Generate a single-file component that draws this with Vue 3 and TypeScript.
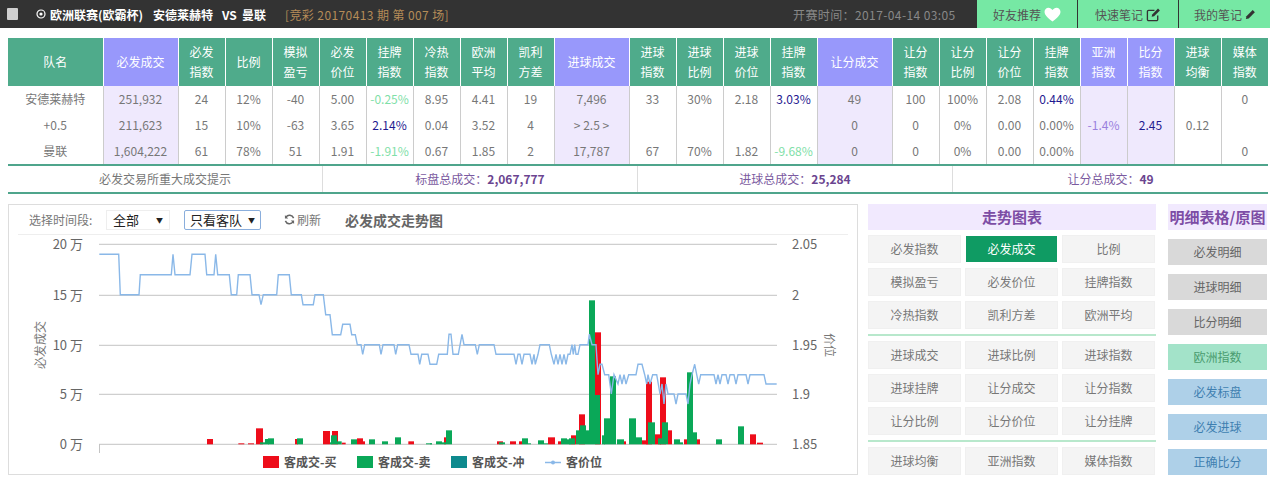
<script setup lang="ts">
type Cell = { t: string; c?: string }
const headers: { t: string[]; p?: boolean }[] = [
  { t: ['队名'] }, { t: ['必发成交'], p: true }, { t: ['必发', '指数'] }, { t: ['比例'] }, { t: ['模拟', '盈亏'] },
  { t: ['必发', '价位'] }, { t: ['挂牌', '指数'] }, { t: ['冷热', '指数'] }, { t: ['欧洲', '平均'] }, { t: ['凯利', '方差'] },
  { t: ['进球成交'], p: true }, { t: ['进球', '指数'] }, { t: ['进球', '比例'] }, { t: ['进球', '价位'] }, { t: ['挂牌', '指数'] },
  { t: ['让分成交'], p: true }, { t: ['让分', '指数'] }, { t: ['让分', '比例'] }, { t: ['让分', '价位'] }, { t: ['挂牌', '指数'] },
  { t: ['亚洲', '指数'], p: true }, { t: ['比分', '指数'], p: true }, { t: ['进球', '均衡'] }, { t: ['媒体', '指数'] },
]
const tint = new Set([1, 10, 15, 20, 21])
const rows: Cell[][] = [
  ['安德莱赫特', '251,932', '24', '12%', '-40', '5.00', 'g-0.25%', '8.95', '4.41', '19', '7,496', '33', '30%', '2.18', 'b3.03%', '49', '100', '100%', '2.08', 'b0.44%', '', '', '', '0'],
  ['+0.5', '211,623', '15', '10%', '-63', '3.65', 'b2.14%', '0.04', '3.52', '4', '> 2.5 >', '', '', '', '', '0', '0', '0%', '0.00', '0.00%', 'p-1.4%', 'b2.45', '0.12', ''],
  ['曼联', '1,604,222', '61', '78%', '51', '1.91', 'g-1.91%', '0.67', '1.85', '2', '17,787', '67', '70%', '1.82', 'g-9.68%', '0', '0', '0%', '0.00', '0.00%', '', '', '', '0'],
].map((r) =>
  r.map((s) => {
    const k = s[0]
    if ((k === 'g' || k === 'b' || k === 'p') && s.length > 1) return { t: s.slice(1), c: k }
    return { t: s }
  }),
)
const summary = [
  { l: '必发交易所重大成交提示', v: '', plain: true },
  { l: '标盘总成交：', v: '2,067,777' },
  { l: '进球总成交：', v: '25,284' },
  { l: '让分总成交：', v: '49' },
]
const groups = [
  [['必发指数', '必发成交', '比例'], ['模拟盈亏', '必发价位', '挂牌指数'], ['冷热指数', '凯利方差', '欧洲平均']],
  [['进球成交', '进球比例', '进球指数'], ['进球挂牌', '让分成交', '让分指数'], ['让分比例', '让分价位', '让分挂牌']],
  [['进球均衡', '亚洲指数', '媒体指数']],
]
const details = [
  { t: '必发明细', k: 'gray' }, { t: '进球明细', k: 'gray' }, { t: '比分明细', k: 'gray' },
  { t: '欧洲指数', k: 'mint' }, { t: '必发标盘', k: 'blue' }, { t: '必发进球', k: 'blue' }, { t: '正确比分', k: 'blue' },
]
const grid = [
  { y: 244.3, l: '20 万', r: '2.05' }, { y: 295.3, l: '15 万', r: '2' }, { y: 345.3, l: '10 万', r: '1.95' },
  { y: 394.3, l: '5 万', r: '1.9' }, { y: 444.3, l: '0 万', r: '1.85' },
]
const L: number[][] = [[298,163],[356,163],[361,284],[417,284],[421,224],[514,224],[519,163],[525,224],[570,224],[576,163],[615,163],[620,224],[642,224],[647,163],[653,224],[688,224],[694,284],[710,284],[715,224],[750,224],[756,284],[777,284],[783,314],[790,284],[830,284],[835,224],[868,224],[874,284],[904,284],[909,314],[940,314],[945,284],[970,284],[977,344],[990,344],[997,404],[1022,404],[1028,373],[1050,373],[1055,404],[1066,404],[1072,434],[1083,434],[1088,463],[1094,434],[1138,434],[1143,463],[1149,434],[1182,434],[1187,463],[1193,434],[1227,434],[1233,463],[1254,463],[1259,493],[1265,463],[1284,463],[1290,493]]
const R: number[][] = [[20,493],[26,463],[52,463],[57,403],[63,403],[69,463],[85,463],[96,403],[102,434],[136,434],[142,463],[148,434],[192,434],[198,463],[252,463],[258,493],[264,463],[270,463],[276,493],[282,463],[300,463],[306,493],[312,463],[316,493],[324,463],[330,434],[358,434],[364,463],[372,493],[378,463],[384,493],[390,463],[396,493],[402,463],[408,493],[414,463],[420,463],[426,434],[430,463],[434,434],[438,463],[444,463],[450,434],[474,434],[478,403],[486,434],[498,434],[504,524],[510,493],[516,493],[524,524],[536,524],[544,582],[552,524],[564,552],[570,524],[576,552],[582,524],[588,552],[596,524],[618,524],[624,493],[636,493],[644,524],[650,552],[654,524],[660,552],[668,524],[680,524],[690,582],[696,552],[702,612],[708,552],[714,582],[732,582],[738,612],[744,582],[768,582],[774,612],[780,552],[786,524],[794,493],[800,524],[806,552],[812,524],[852,524],[858,552],[864,524],[870,552],[876,524],[888,524],[894,552],[900,524],[912,524],[918,552],[924,524],[948,524],[954,552],[960,524],[1002,524],[1008,552],[1040,552]]
const pricePts = [...L, ...R.map(([x, y]) => [x + 1290, y])]
  .map(([x, y]) => `${(x / 3).toFixed(1)},${(200 + y / 3).toFixed(1)}`)
  .join(' ')
const bar = (a: number[], off: number) => ({
  x: (a[0] + off) / 3,
  w: (a[1] - a[0]) / 3,
  y: 200 + a[2] / 3,
  h: 444.3 - (200 + a[2] / 3),
})
const redBars = [
  ...[[621,639,717],[715,733,730],[744,762,730],[768,789,685],[885,894,717],[969,990,693],[996,1014,693],[1025,1037,728],[1071,1089,715],[1089,1095,724],[1225,1242,724]].map((a) => bar(a, 0)),
  ...[[42,48,712],[201,219,724],[240,258,724],[267,276,724],[354,375,712],[384,393,724],[423,438,706],[447,465,643],[495,513,397],[582,588,724],[636,654,721],[648,666,545],[675,693,703],[690,708,532],[714,726,691],[762,771,718],[801,810,718],[960,978,703],[981,999,728]].map((a) => bar(a, 1290)),
]
const greenBars = [
  ...[[780,795,727],[795,807,717],[804,822,715],[891,909,715],[990,996,727],[993,1011,706],[1011,1025,724],[1053,1071,718],[1107,1125,718],[1146,1164,724],[1185,1203,712],[1278,1296,730]].map((a) => bar(a, 0)),
  ...[[0,6,730],[18,36,724],[36,48,727],[48,66,691],[207,225,727],[276,294,715],[294,303,730],[324,342,721],[342,354,730],[393,411,715],[411,423,718],[417,435,715],[438,450,691],[450,468,676],[468,477,691],[477,495,301],[495,510,585],[516,525,706],[522,540,655],[540,558,529],[561,582,718],[597,618,655],[618,636,712],[654,675,667],[684,696,715],[696,714,667],[732,750,718],[750,759,727],[771,789,517],[789,801,697],[858,876,718],[924,942,679]].map((a) => bar(a, 1290)),
]
</script>

<template>
  <div class="page">
    <header class="top">
      <span class="check"></span>
      <div class="match">
        <svg class="target" viewBox="0 0 10 10"><circle cx="5" cy="5" r="4" fill="none" stroke="#fff" stroke-width="1.2" /><circle cx="5" cy="5" r="1.6" fill="#fff" /></svg>
        <b class="league">欧洲联赛(欧霸杯)</b>
        <b class="home">安德莱赫特</b>
        <b class="vs">VS</b>
        <b>曼联</b>
      </div>
      <span class="issue">[竞彩 20170413 期 第 007 场]</span>
      <span class="time">开赛时间：2017-04-14 03:05</span>
      <nav class="tabs">
        <a class="tab">好友推荐
          <svg viewBox="0 0 18 16" class="heart"><path d="M9 15.5C4 11.5.5 8.6.5 5 .5 2.5 2.4.7 4.7.7 6.5.7 8 1.7 9 3.3 10 1.7 11.5.7 13.3.7c2.3 0 4.2 1.8 4.2 4.3 0 3.6-3.5 6.5-8.5 10.5z" fill="#fff" /></svg>
        </a>
        <a class="tab">快速笔记
          <svg viewBox="0 0 16 16" class="ic"><path d="M12.5 9v4.2a1.3 1.3 0 0 1-1.3 1.3H2.8a1.3 1.3 0 0 1-1.3-1.3V4.8a1.3 1.3 0 0 1 1.3-1.3H9" fill="none" stroke="#333" stroke-width="1.4" /><path d="M6 10.5l.6-2.6L12.8 1.7l2 2-6.2 6.2z" fill="#333" /></svg>
        </a>
        <a class="tab last">我的笔记
          <svg viewBox="0 0 12 12" class="pen"><path d="M1 11l.6-3L8.4 1.2l2.4 2.4L4 10.4z" fill="#333" /></svg>
        </a>
      </nav>
    </header>

    <table class="data">
      <colgroup>
        <col class="c-name" />
        <template v-for="(h, i) in headers.slice(1)" :key="i">
          <col :class="h.t.length === 1 && h.p ? 'c-wide' : 'c-norm'" />
        </template>
      </colgroup>
      <thead>
        <tr>
          <th v-for="(h, i) in headers" :key="i" :class="{ pur: h.p }">
            <div v-for="line in h.t" :key="line">{{ line }}</div>
          </th>
        </tr>
      </thead>
      <tbody>
        <tr v-for="(r, ri) in rows" :key="ri">
          <td v-for="(c, ci) in r" :key="ci" :class="[{ tint: tint.has(ci) }, c.c ? 'col-' + c.c : '']">{{ c.t }}</td>
        </tr>
      </tbody>
    </table>

    <div class="summary">
      <div v-for="s in summary" :key="s.l" class="sum" :class="{ plain: s.plain }">{{ s.l }}<b>{{ s.v }}</b></div>
    </div>

    <section class="lower">
      <div class="chart">
        <div class="toolbar">
          <span class="lbl">选择时间段:</span>
          <span class="sel">全部<i>▼</i></span>
          <span class="sel on">只看客队<i>▼</i></span>
          <span class="refresh">
            <svg viewBox="0 0 12 12" class="ref-ic"><path d="M10.5 4.5A4.8 4.8 0 0 0 2 3.6M1.5 7.5A4.8 4.8 0 0 0 10 8.4" fill="none" stroke="#666" stroke-width="1.6" /><path d="M1 1.2v3.6h3.6zM11 10.8V7.2H7.4z" fill="#666" /></svg>刷新
          </span>
          <b class="ctitle">必发成交走势图</b>
        </div>
        <svg class="plot" viewBox="9 235 848 239">
          <line v-for="g in grid" :key="g.y" x1="99" x2="777" :y1="g.y" :y2="g.y" class="gl" />
          <line x1="99.5" x2="99.5" y1="444" y2="453" class="gl" />
          <text v-for="g in grid" :key="g.l" x="83" :y="g.y + 5" class="ax" text-anchor="end">{{ g.l }}</text>
          <text v-for="g in grid" :key="g.r" x="792" :y="g.y + 5" class="ax">{{ g.r }}</text>
          <text class="axt" text-anchor="middle" transform="translate(45 345) rotate(-90)">必发成交</text>
          <text class="axt" text-anchor="middle" transform="translate(825 345) rotate(90)">价位</text>
          <rect v-for="(b, i) in redBars" :key="'r' + i" :x="b.x" :y="b.y" :width="b.w" :height="b.h" fill="#ee0d1a" />
          <rect v-for="(b, i) in greenBars" :key="'g' + i" :x="b.x" :y="b.y" :width="b.w" :height="b.h" fill="#0aa858" />
          <polyline :points="pricePts" fill="none" stroke="#8ab8e8" stroke-width="1.4" />
          <rect x="263" y="456" width="16" height="12" fill="#ee0d1a" />
          <text x="284" y="467" class="lg">客成交-买</text>
          <rect x="357" y="456" width="16" height="12" fill="#0aa858" />
          <text x="378" y="467" class="lg">客成交-卖</text>
          <rect x="451" y="456" width="16" height="12" fill="#0e8a8e" />
          <text x="472" y="467" class="lg">客成交-冲</text>
          <line x1="545" x2="561" y1="462.5" y2="462.5" stroke="#8ab8e8" stroke-width="1.5" />
          <circle cx="553" cy="462.5" r="2" fill="#8ab8e8" />
          <text x="566" y="467" class="lg">客价位</text>
        </svg>
      </div>

      <aside class="trend">
        <h3 class="phead">走势图表</h3>
        <template v-for="(g, gi) in groups" :key="gi">
          <hr v-if="gi > 0" class="sep" />
          <div class="btns">
            <template v-for="row in g" :key="row[0]">
              <a v-for="b in row" :key="b" class="btn" :class="{ active: b === '必发成交' }">{{ b }}</a>
            </template>
          </div>
        </template>
      </aside>

      <aside class="detail">
        <h3 class="phead dh">明细表格/原图</h3>
        <a v-for="d in details" :key="d.t" class="dbtn" :class="d.k">{{ d.t }}</a>
      </aside>
    </section>
  </div>
</template>

<style>
html, body { margin: 0; overflow: hidden; background: #fff; }
</style>

<style scoped>
.page { width: 1270px; height: 477px; overflow: hidden; font-family: "Noto Sans CJK SC", "Open Sans", sans-serif; font-size: 12px; color: #777; }
.top { height: 28px; background: #333; display: flex; align-items: center; padding-left: 7px; color: #fff; }
.check { width: 11px; height: 12px; background: #cfcfcf; border-radius: 1px; margin-right: 18px; flex: none; }
.match { display: flex; align-items: center; font-size: 12px; width: 249px; flex: none; }
.target { width: 10px; height: 10px; margin-right: 4px; }
.league { width: 103px; }
.home { width: 69px; }
.vs { width: 20px; }
.match b { font-weight: 700; white-space: nowrap; }
.issue { color: #b58c58; width: 508px; white-space: nowrap; flex: none; letter-spacing: 0.4px; }
.time { color: #888; width: 183px; white-space: nowrap; flex: none; letter-spacing: 0.4px; }
.tabs { display: flex; height: 28px; flex: none; }
.tab { width: 100px; height: 28px; background: #76e8a4; margin-left: 1px; color: #555; display: flex; align-items: center; justify-content: center; gap: 3px; }
.tab.last { width: 92px; }
.heart { width: 17px; height: 15px; }
.ic { width: 15px; height: 15px; }
.pen { width: 11px; height: 11px; }

.data { margin: 10px 0 0 8px; width: 1260px; table-layout: fixed; border-collapse: collapse; }
.c-name { width: 95px; }
.c-wide { width: 75px; }
.c-norm { width: 47px; }
.data th { height: 48px; padding: 0; background: #4fab8b; color: #fff; font-weight: 400; font-size: 12px; line-height: 20px; border-right: 1px solid #fff; box-sizing: border-box; }
.data th:last-child { border-right: 0; }
.data th.pur { background: #9898fb; }
.data td { height: 26px; padding: 0; text-align: center; font-size: 12px; line-height: 26px; border-right: 1px solid #ccc; white-space: nowrap; overflow: hidden; box-sizing: border-box; }
.data td:last-child { border-right: 0; }
.data td.tint { background: #efe9fd; }
.col-g { color: #7fe0a8; }
.col-b { color: #1f1a90; }
.col-p { color: #9a80dd; }

.summary { margin-left: 8px; width: 1260px; height: 30px; display: grid; grid-template-columns: repeat(4, 1fr); border-top: 2px solid #4fa58c; border-bottom: 2px solid #4fa58c; box-sizing: border-box; }
.sum { text-align: center; line-height: 25px; color: #7b5aa0; border-right: 1px solid #ddd; }
.sum:last-child { border-right: 0; }
.sum.plain { color: #777; }
.sum b { color: #6b4590; font-weight: 700; }

.lower { margin: 10px 0 0 8px; display: flex; align-items: flex-start; }
.chart { width: 850px; height: 271px; border: 1px solid #ddd; box-sizing: border-box; flex: none; }
.toolbar { margin: 0 9px; height: 29px; padding-left: 11px; border-bottom: 1px solid #eee; display: flex; align-items: center; }
.lbl { width: 77px; color: #777; white-space: nowrap; flex: none; }
.sel { height: 20px; width: 64px; flex: none; border: 1px solid #eee; box-sizing: border-box; display: flex; align-items: center; justify-content: space-between; padding: 0 6px; color: #222; font-size: 13px; white-space: nowrap; }
.sel i { font-style: normal; font-size: 7px; }
.sel.on { width: 77px; margin-left: 14px; border: 1px solid #8aaedc; border-radius: 2px; padding: 0 5px; }
.refresh { margin-left: 23px; width: 61px; flex: none; display: flex; align-items: center; color: #777; font-size: 12px; gap: 2px; }
.ref-ic { width: 11px; height: 11px; }
.ctitle { color: #666; font-size: 14px; font-weight: 700; white-space: nowrap; }
.plot { display: block; width: 848px; height: 239px; }
.gl { stroke: #c4c4c4; stroke-width: 1; }
.ax { font-size: 13px; fill: #666; }
.axt { font-size: 12px; fill: #777; }
.lg { font-size: 12px; font-weight: 700; fill: #555; }

.trend { width: 288px; margin-left: 10px; flex: none; }
.phead { margin: 0; height: 26px; line-height: 25px; background: #f1e9fe; color: #7d4da5; font-size: 15px; font-weight: 700; text-align: center; }
.btns { display: grid; grid-template-columns: repeat(3, 93px); gap: 5px 4px; margin-top: 5px; }
.btn { height: 28px; line-height: 25px; background: #f4f4f4; border: 1px solid #f0f0f0; box-sizing: border-box; text-align: center; color: #777; font-size: 12px; }
.btn.active { background: #0f9b63; border: 1px solid #fff; color: #fff; }
.sep { border: 0; height: 2px; background: #b8e8cc; margin: 5px 0 0; }
.detail { width: 99px; margin-left: 12px; flex: none; display: flex; flex-direction: column; gap: 9px; }
.dh { white-space: nowrap; }
.dbtn { height: 26px; line-height: 25px; text-align: center; font-size: 12px; }
.gray { background: #d9d9d9; color: #666; }
.mint { background: #a3e3c9; color: #4a9c6f; }
.blue { background: #aed0e8; color: #3e7fb0; }
</style>
